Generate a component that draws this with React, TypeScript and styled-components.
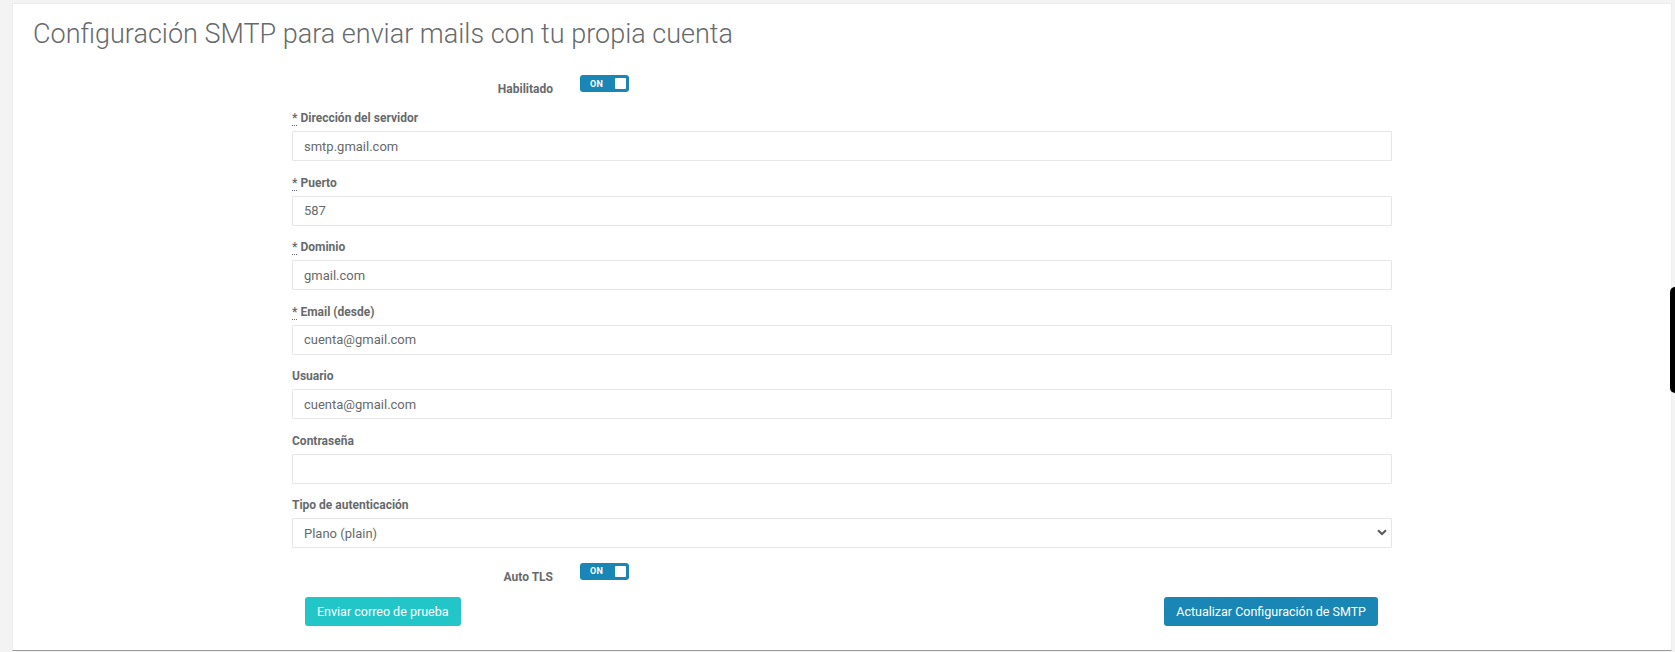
import styled, { createGlobalStyle } from 'styled-components';

const GlobalStyle = createGlobalStyle`
  html, body {
    margin: 0;
    padding: 0;
    background: #f3f3f4;
    font-family: Roboto, "Liberation Sans", sans-serif;
    color: #676a6c;
  }
  * {
    box-sizing: border-box;
  }
`;

const Page = styled.div`
  padding: 3px 3px 0 12px;
`;

const Card = styled.div`
  background: #ffffff;
  border: 1px solid #ececec;
  border-bottom: 1px solid #9a9a9a;
  height: 648px;
  padding: 14px 20px 0 20px;
`;

const Title = styled.h1`
  margin: 0;
  font-size: 27px;
  font-weight: 300;
  line-height: 32px;
  color: #676a6c;
`;

const Form = styled.form`
  width: 1100px;
  margin: 25px auto 0 auto;
`;

const SwitchRow = styled.div<{ $pt: number; $mb: number }>`
  display: grid;
  grid-template-columns: 261px auto;
  column-gap: 27px;
  align-items: start;
  padding-top: ${(p) => p.$pt}px;
  margin-bottom: ${(p) => p.$mb}px;
`;

const SwitchLabel = styled.label`
  text-align: right;
  font-size: 12px;
  font-weight: 700;
  color: #676a6c;
  padding-top: 6px;
  line-height: 17px;
`;

const SwitchTrack = styled.div`
  width: 49px;
  height: 17px;
  border-radius: 3px;
  background: #1a86b6;
  display: flex;
  align-items: center;
  justify-content: space-between;
  padding: 0 3px 0 10px;
`;

const SwitchText = styled.span`
  font-size: 9px;
  font-weight: 700;
  color: #ffffff;
  letter-spacing: 0.3px;
`;

const SwitchKnob = styled.span`
  width: 11px;
  height: 11px;
  background: #ffffff;
  border-radius: 1px;
`;

const Group = styled.div`
  margin-bottom: 10.5px;
`;

const FieldLabel = styled.label`
  display: block;
  font-size: 12px;
  font-weight: 700;
  line-height: 17px;
  padding-top: 3px;
  margin-bottom: 4px;
  color: #676a6c;
`;

const Required = styled.abbr`
  text-decoration: none;
  border-bottom: 1px dotted #676a6c;
  margin-right: 3px;
`;

const Input = styled.input`
  display: block;
  width: 100%;
  height: 30px;
  border: 1px solid #e5e6e7;
  border-radius: 1px;
  padding: 0 11px;
  font-family: Roboto, "Liberation Sans", sans-serif;
  font-size: 13px;
  color: #676a6c;
  background: #ffffff;
  outline: none;
`;

const SelectWrap = styled.div`
  position: relative;
`;

const Select = styled.select`
  display: block;
  width: 100%;
  height: 30px;
  border: 1px solid #e5e6e7;
  border-radius: 1px;
  padding: 0 11px;
  font-family: Roboto, "Liberation Sans", sans-serif;
  font-size: 13px;
  color: #676a6c;
  background: #ffffff;
  appearance: none;
  outline: none;
`;

const Chevron = styled.svg`
  position: absolute;
  right: 5px;
  top: 11px;
  pointer-events: none;
`;

const Actions = styled.div`
  display: flex;
  justify-content: space-between;
  padding: 0 14px 0 13px;
`;

const Button = styled.button<{ $variant: 'info' | 'primary' }>`
  height: 29px;
  padding: 0 12px;
  border: none;
  border-radius: 3px;
  font-family: Roboto, "Liberation Sans", sans-serif;
  font-size: 12.5px;
  color: #ffffff;
  background: ${(p) => (p.$variant === 'info' ? '#23c6c8' : '#1a86b6')};
  cursor: pointer;
`;

const SideTab = styled.div`
  position: fixed;
  right: 0;
  top: 287px;
  width: 5px;
  height: 106px;
  background: #000000;
  border-radius: 5px 0 0 5px;
`;

const Toggle = ({ label, pt, mb }: { label: string; pt: number; mb: number }) => (
  <SwitchRow $pt={pt} $mb={mb}>
    <SwitchLabel>{label}</SwitchLabel>
    <SwitchTrack>
      <SwitchText>ON</SwitchText>
      <SwitchKnob />
    </SwitchTrack>
  </SwitchRow>
);

const Field = ({ label, value, required }: { label: string; value: string; required?: boolean }) => (
  <Group>
    <FieldLabel>
      {required ? <Required title='requerido'>*</Required> : undefined}
      {label}
    </FieldLabel>
    <Input defaultValue={value} />
  </Group>
);

export default function App() {
  return (
    <Page>
      <GlobalStyle />
      <Card>
        <Title>Configuración SMTP para enviar mails con tu propia cuenta</Title>
        <Form onSubmit={(e) => e.preventDefault()}>
          <Toggle label='Habilitado' pt={0} mb={9} />
          <Field required label='Dirección del servidor' value='smtp.gmail.com' />
          <Field required label='Puerto' value='587' />
          <Field required label='Dominio' value='gmail.com' />
          <Field required label='Email (desde)' value='cuenta@gmail.com' />
          <Field label='Usuario' value='cuenta@gmail.com' />
          <Field label='Contraseña' value='' />
          <Group>
            <FieldLabel>Tipo de autenticación</FieldLabel>
            <SelectWrap>
              <Select defaultValue='plain'>
                <option value='plain'>Plano (plain)</option>
                <option value='login'>Login</option>
                <option value='cram_md5'>CRAM-MD5</option>
              </Select>
              <Chevron width='10' height='7' viewBox='0 0 10 7'>
                <path d='M1 1.2 L5 5 L9 1.2' fill='none' stroke='#5a5a5a' strokeWidth='2' />
              </Chevron>
            </SelectWrap>
          </Group>
          <Toggle label='Auto TLS' pt={4} mb={11} />
          <Actions>
            <Button type='button' $variant='info'>
              Enviar correo de prueba
            </Button>
            <Button type='submit' $variant='primary'>
              Actualizar Configuración de SMTP
            </Button>
          </Actions>
        </Form>
      </Card>
      <SideTab />
    </Page>
  );
}
